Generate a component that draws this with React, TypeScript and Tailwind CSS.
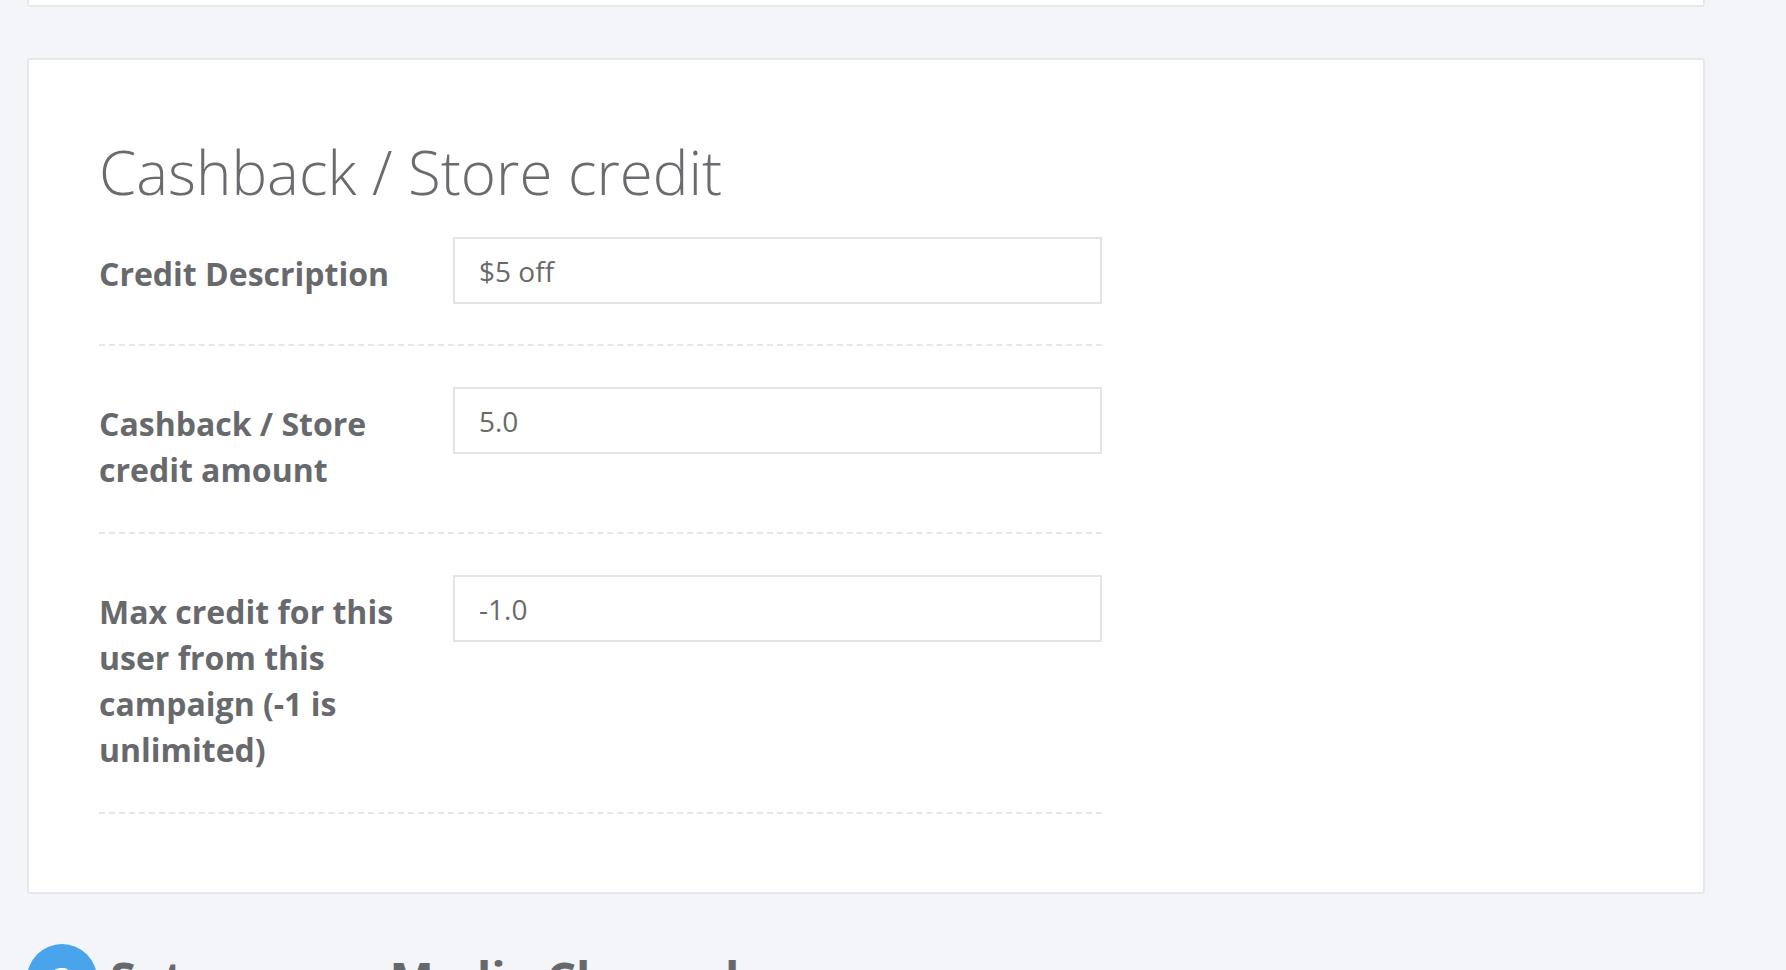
type Field = {
  label: string
  value: string
}

const fields: Field[] = [
  { label: "Credit Description", value: "$5 off" },
  { label: "Cashback / Store credit amount", value: "5.0" },
  { label: "Max credit for this user from this campaign (-1 is unlimited)", value: "-1.0" }
]

function FormRow({ label, value, first }: Field & { first: boolean }) {
  return (
    <div
      className={
        "flex w-[1003px] border-b-2 border-dashed border-[#e7e7e7] pb-[40px] " +
        (first ? "" : "pt-[41px]")
      }
    >
      <label className="w-[354px] shrink-0 pr-[30px] pt-[14px] text-[32px] font-bold leading-[1.42857] text-[#68696d]">
        {label}
      </label>

      <input
        type="text"
        defaultValue={value}
        className="h-[67px] w-[649px] shrink-0 border-2 border-[#e4e4e4] bg-white px-[24px] text-[28px] text-[#6a6a6a] outline-none"
      />
    </div>
  )
}

export default function App() {
  return (
    <div className="h-[970px] overflow-hidden bg-[#f4f5f8] font-['Open_Sans',sans-serif]">
      <div className="ml-[27px] w-[1678px]">
        {/* tail end of the card above */}
        <div className="h-[7px] rounded-b-[3px] border-x-2 border-b-2 border-[#e6e8ec] bg-white" />

        <div className="mt-[51px] rounded-[3px] border-2 border-[#e6e8ec] bg-white pb-[78px] pl-[70px] pt-[79px]">
          <h2 className="mb-[32px] text-[60px] font-light leading-[66px] text-[#696b6f]">
            Cashback / Store credit
          </h2>

          {fields.map((f, i) => (
            <FormRow key={f.label} label={f.label} value={f.value} first={i === 0} />
          ))}
        </div>

        <div className="mt-[50px] flex items-center gap-[13px]">
          <div className="flex h-[70px] w-[70px] shrink-0 items-center justify-center rounded-full bg-[#4aa4ec] text-[34px] font-bold text-white">
            3
          </div>
          <h2 className="text-[47px] font-bold leading-[1.1] text-[#67686c]">
            Set up your Media Channels
          </h2>
        </div>
      </div>
    </div>
  )
}
